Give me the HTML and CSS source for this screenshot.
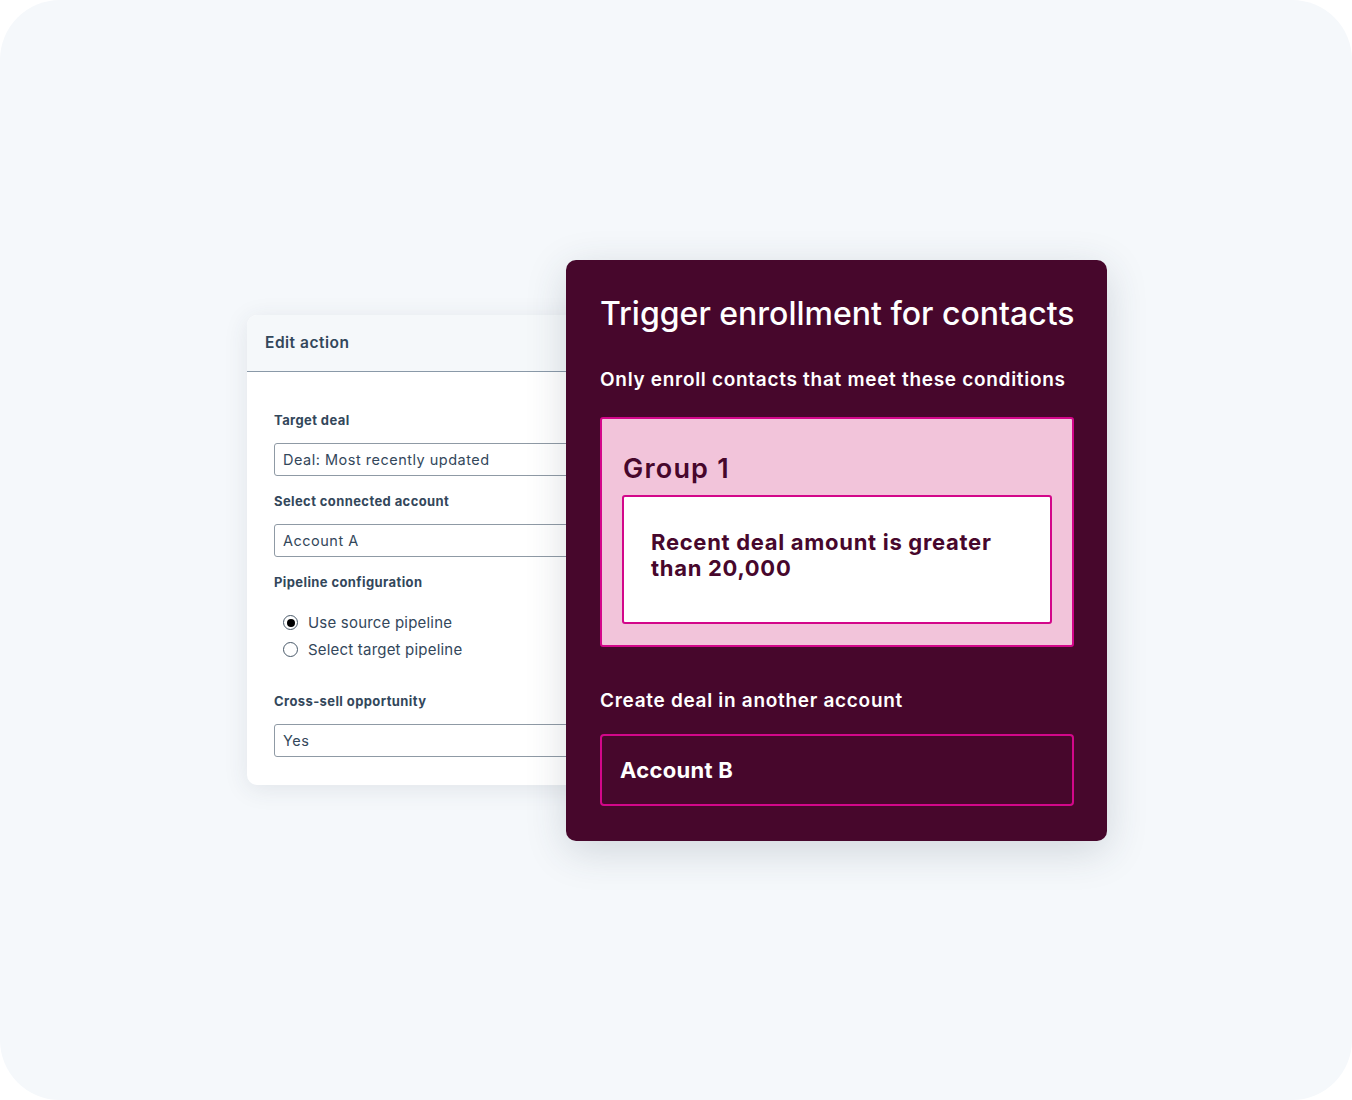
FILE: index.html
```html
<!DOCTYPE html>
<html>

<head>
    <meta charset="UTF-8">
    <title>Cross-account deal workflow</title>
    <link rel="stylesheet" href="styles.css">
</head>
<body>
<div class="canvas">
    <div class="stage">

        <div class="edit-card">
            <div class="edit-header">Edit action</div>
            <div class="edit-body">
                <div class="field-label">Target deal</div>
                <div class="field-input">Deal: Most recently updated</div>

                <div class="field-label">Select connected account</div>
                <div class="field-input">Account A</div>

                <div class="field-label">Pipeline configuration</div>
                <div class="radio-list">
                    <div class="radio-row"><span class="radio checked"></span>Use source pipeline</div>
                    <div class="radio-row"><span class="radio"></span>Select target pipeline</div>
                </div>

                <div class="field-label">Cross-sell opportunity</div>
                <div class="field-input">Yes</div>
            </div>
        </div>

        <div class="trigger-card">
            <h1>Trigger enrollment for contacts</h1>
            <h2>Only enroll contacts that meet these conditions</h2>
            <div class="group-box">
                <h3>Group 1</h3>
                <div class="condition">Recent deal amount is greater than 20,000</div>
            </div>
            <h2 class="second">Create deal in another account</h2>
            <div class="account-box">Account B</div>
        </div>

    </div>
</div>
</body>
</html>
```

FILE: styles.css
```css
body {
    margin: 0;
    background: #ffffff;
    font-family: Inter, "Noto Sans", sans-serif;
}

.canvas {
    width: 1352px;
    height: 1100px;
    border-radius: 60px;
    background: #f5f8fb;
    display: flex;
    align-items: center;
    justify-content: center;
}

.stage {
    display: flex;
    align-items: center;
    margin-left: 2px;
}

/* left panel */
.edit-card {
    width: 340px;
    height: 470px;
    background: #ffffff;
    border-radius: 10px;
    box-shadow: 0 4px 24px rgba(45, 62, 80, 0.10);
    overflow: hidden;
}

.edit-header {
    height: 56px;
    background: #f5f8fa;
    border-bottom: 1px solid #8a99a8;
    padding-left: 18px;
    line-height: 56px;
    font-size: 15.5px;
    font-weight: 600;
    letter-spacing: 0.5px;
    color: #33475b;
}

.edit-body {
    padding: 39px 0 0 27px;
}

.field-label {
    font-size: 13px;
    font-weight: 700;
    letter-spacing: 0.4px;
    color: #33475b;
    line-height: 18px;
}

.field-input {
    height: 31px;
    border: 1px solid #8f9aa5;
    border-radius: 3px;
    margin: 14px 0 16px;
    padding-left: 8px;
    line-height: 31px;
    font-size: 14.5px;
    letter-spacing: 0.5px;
    color: #33475b;
}

.radio-list {
    padding: 18px 0 29px 9px;
}

.radio-row {
    display: flex;
    align-items: center;
    height: 27px;
    font-size: 15px;
    letter-spacing: 0.2px;
    color: #33475b;
}

.radio {
    width: 15px;
    height: 15px;
    border: 1.5px solid #4a5a6a;
    border-radius: 50%;
    margin-right: 10px;
    box-sizing: border-box;
    display: flex;
    align-items: center;
    justify-content: center;
}

.radio.checked::after {
    content: "";
    width: 8px;
    height: 8px;
    border-radius: 50%;
    background: #000000;
}

/* right panel */
.trigger-card {
    width: 541px;
    box-sizing: border-box;
    margin-left: -21px;
    padding: 34px 33px 35px 34px;
    background: #47072c;
    border-radius: 10px;
    box-shadow: 0 10px 40px rgba(45, 62, 80, 0.18);
    color: #ffffff;
    position: relative;
}

.trigger-card h1 {
    margin: 0;
    font-size: 32px;
    font-weight: 500;
    line-height: 40px;
    white-space: nowrap;
}

.trigger-card h2 {
    margin: 33px 0 0;
    font-size: 19px;
    font-weight: 600;
    line-height: 26px;
    letter-spacing: 0.7px;
}

.trigger-card h2.second {
    margin-top: 41px;
}

.group-box {
    margin-top: 24px;
    background: #f2c4da;
    border: 2px solid #d3078a;
    border-radius: 3px;
    padding: 32px 20px 21px;
}

.group-box h3 {
    margin: 0 0 8px 1px;
    font-size: 27px;
    font-weight: 600;
    line-height: 36px;
    letter-spacing: 1.2px;
    color: #47072c;
}

.condition {
    background: #ffffff;
    border: 2px solid #d3078a;
    border-radius: 3px;
    height: 129px;
    box-sizing: border-box;
    padding: 32px 40px 0 27px;
    font-size: 22px;
    font-weight: 700;
    line-height: 26px;
    letter-spacing: 0.7px;
    color: #47072c;
}

.account-box {
    margin-top: 20px;
    height: 72px;
    box-sizing: border-box;
    border: 2px solid #d3078a;
    border-radius: 4px;
    padding-left: 18px;
    display: flex;
    align-items: center;
    font-size: 22px;
    font-weight: 700;
    letter-spacing: 0.3px;
}
```
